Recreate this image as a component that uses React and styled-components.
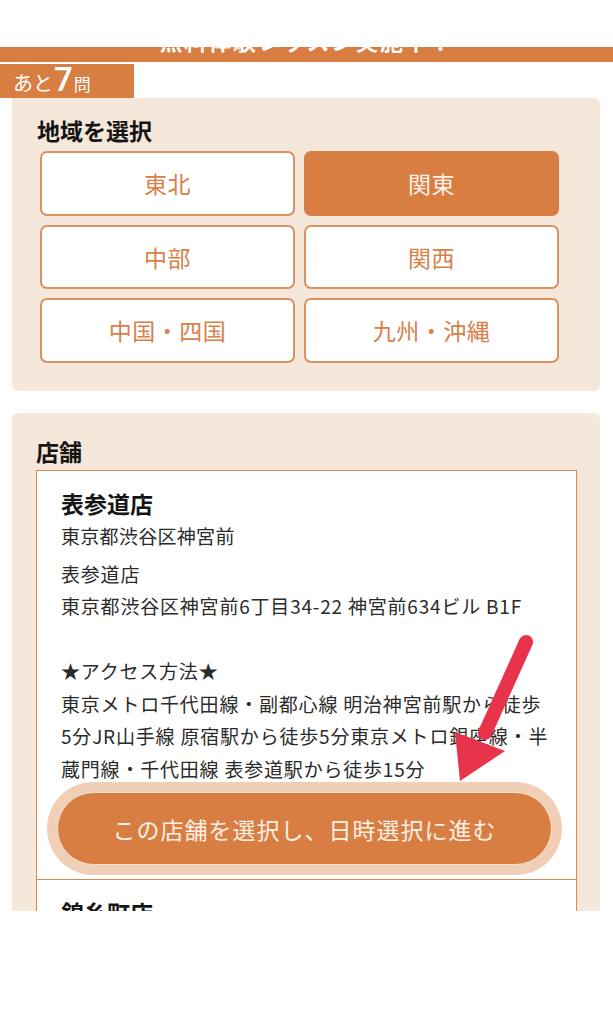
import React from 'react';
import styled, { createGlobalStyle } from 'styled-components';

//----------------------------------------
// Styled Components
//----------------------------------------

const GlobalStyle = createGlobalStyle`
  html, body {
    margin: 0;
    padding: 0;
    background: #fff;
  }
  body {
    font-family: "Noto Sans CJK JP", "Noto Sans", sans-serif;
    color: #333;
  }
`;

const ORANGE = '#d87e42';
const LINE = '#d98a52';
const BEIGE = '#f5e8da';

const Viewport = styled.div`
  height: 911px;
  overflow: hidden;
`;

const TopGap = styled.div`
  height: 47px;
  background: #fff;
`;

const HeaderBar = styled.div`
  display: flow-root;
  height: 15px;
  background: ${ORANGE};
  overflow: hidden;
  text-align: center;
`;

const HeaderText = styled.div`
  margin-top: -18px;
  color: #fff;
  font-size: 23px;
  line-height: 22px;
  font-weight: bold;
  letter-spacing: 1.5px;
`;

const Remain = styled.div`
  margin-top: 2px;
  width: 134px;
  height: 34px;
  box-sizing: border-box;
  padding-left: 13px;
  background: ${ORANGE};
  color: #fff;
  display: flex;
  align-items: flex-end;
`;

const RemainText = styled.div`
  font-size: 20px;
  line-height: 1;
  margin-bottom: 2px;
`;

const RemainNum = styled.span`
  font-family: Roboto, "Liberation Sans", sans-serif;
  font-size: 33px;
  font-weight: 500;
  margin: 0 1px;
`;

const RemainUnit = styled.span`
  font-size: 17px;
`;

const Panel = styled.section`
  margin: ${({ $first }) => ($first ? '0' : '22px')} 13px 0 12px;
  padding: ${({ $first }) => ($first ? '17px 41px 28px 25px' : '23px 23px 0 24px')};
  background: ${BEIGE};
  border-radius: ${({ $first }) => ($first ? '0 6px 6px 6px' : '6px 6px 0 0')};
`;

const PanelTitle = styled.h2`
  margin: 0 0 ${({ $gap }) => $gap}px;
  font-size: 23px;
  line-height: 30px;
  font-weight: bold;
  color: #151515;
`;

const RegionGrid = styled.div`
  margin-left: 3px;
  display: grid;
  grid-template-columns: 255px 255px;
  grid-auto-rows: 64.5px;
  gap: 9px;
`;

const RegionButton = styled.div`
  box-sizing: border-box;
  display: flex;
  align-items: center;
  justify-content: center;
  border: 2px solid ${({ $active }) => ($active ? ORANGE : '#dc9260')};
  border-radius: 7px;
  background: ${({ $active }) => ($active ? ORANGE : '#fff')};
  color: ${({ $active }) => ($active ? '#fdf1e7' : '#d8804a')};
  font-size: 23px;
  letter-spacing: 0.5px;
`;

const ShopList = styled.div`
  border: 1.5px solid ${LINE};
  background: #fff;
`;

const ShopCard = styled.div`
  position: relative;
  padding: 15px 24px 4px;
  & + & {
    border-top: 1.5px solid ${LINE};
  }
`;

const ShopName = styled.div`
  font-size: 23px;
  line-height: 34px;
  font-weight: bold;
  color: #151515;
`;

const ShopArea = styled.div`
  font-size: 19px;
  line-height: 32px;
  letter-spacing: 0.3px;
  color: #2b2b2b;
`;

const ShopDetail = styled.div`
  margin-top: 6px;
  font-size: 19px;
  line-height: 32.5px;
  letter-spacing: 0.8px;
  white-space: nowrap;
  color: #2b2b2b;
`;

const SelectHalo = styled.div`
  margin: -3px -10px 0 -14px;
  padding: 10px;
  background: #f1cfb7;
  border-radius: 47px;
`;

const SelectButton = styled.div`
  height: 73px;
  box-sizing: border-box;
  display: flex;
  align-items: center;
  justify-content: center;
  background: ${ORANGE};
  border: 1.5px solid #f7e2d3;
  border-radius: 37px;
  color: #fdf0e6;
  font-size: 23px;
  letter-spacing: 1px;
`;

const Arrow = styled.svg`
  position: absolute;
  left: 400px;
  top: 150px;
  width: 110px;
  height: 170px;
  pointer-events: none;
`;

//----------------------------------------
// React Component
//----------------------------------------

const regions = [
  { name: '東北' },
  { name: '関東', active: true },
  { name: '中部' },
  { name: '関西' },
  { name: '中国・四国' },
  { name: '九州・沖縄' },
];

const App = () => (
  <>
    <GlobalStyle />
    <Viewport>
      <TopGap />
      <HeaderBar>
        <HeaderText>無料体験レッスン実施中！</HeaderText>
      </HeaderBar>
      <Remain>
        <RemainText>
          あと<RemainNum>7</RemainNum><RemainUnit>問</RemainUnit>
        </RemainText>
      </Remain>

      <Panel $first>
        <PanelTitle $gap={6}>地域を選択</PanelTitle>
        <RegionGrid>
          {regions.map((r) => (
            <RegionButton key={r.name} $active={r.active}>{r.name}</RegionButton>
          ))}
        </RegionGrid>
      </Panel>

      <Panel>
        <PanelTitle $gap={4}>店舗</PanelTitle>
        <ShopList>
          <ShopCard>
            <ShopName>表参道店</ShopName>
            <ShopArea>東京都渋谷区神宮前</ShopArea>
            <ShopDetail>
              表参道店<br />
              東京都渋谷区神宮前6丁目34-22 神宮前634ビル B1F<br />
              <br />
              ★アクセス方法★<br />
              東京メトロ千代田線・副都心線 明治神宮前駅から徒歩<br />
              5分JR山手線 原宿駅から徒歩5分東京メトロ銀座線・半<br />
              蔵門線・千代田線 表参道駅から徒歩15分
            </ShopDetail>
            <SelectHalo>
              <SelectButton>この店舗を選択し、日時選択に進む</SelectButton>
            </SelectHalo>
            <Arrow viewBox="0 0 110 170">
              <line x1="89" y1="21" x2="48" y2="112" stroke="#e8344a" strokeWidth="14" strokeLinecap="round" />
              <polygon points="18,111 68,130 23,160" fill="#e8344a" />
            </Arrow>
          </ShopCard>
          <ShopCard>
            <ShopName>錦糸町店</ShopName>
            <ShopArea>東京都墨田区江東橋</ShopArea>
          </ShopCard>
        </ShopList>
      </Panel>
    </Viewport>
  </>
);

export default App;
